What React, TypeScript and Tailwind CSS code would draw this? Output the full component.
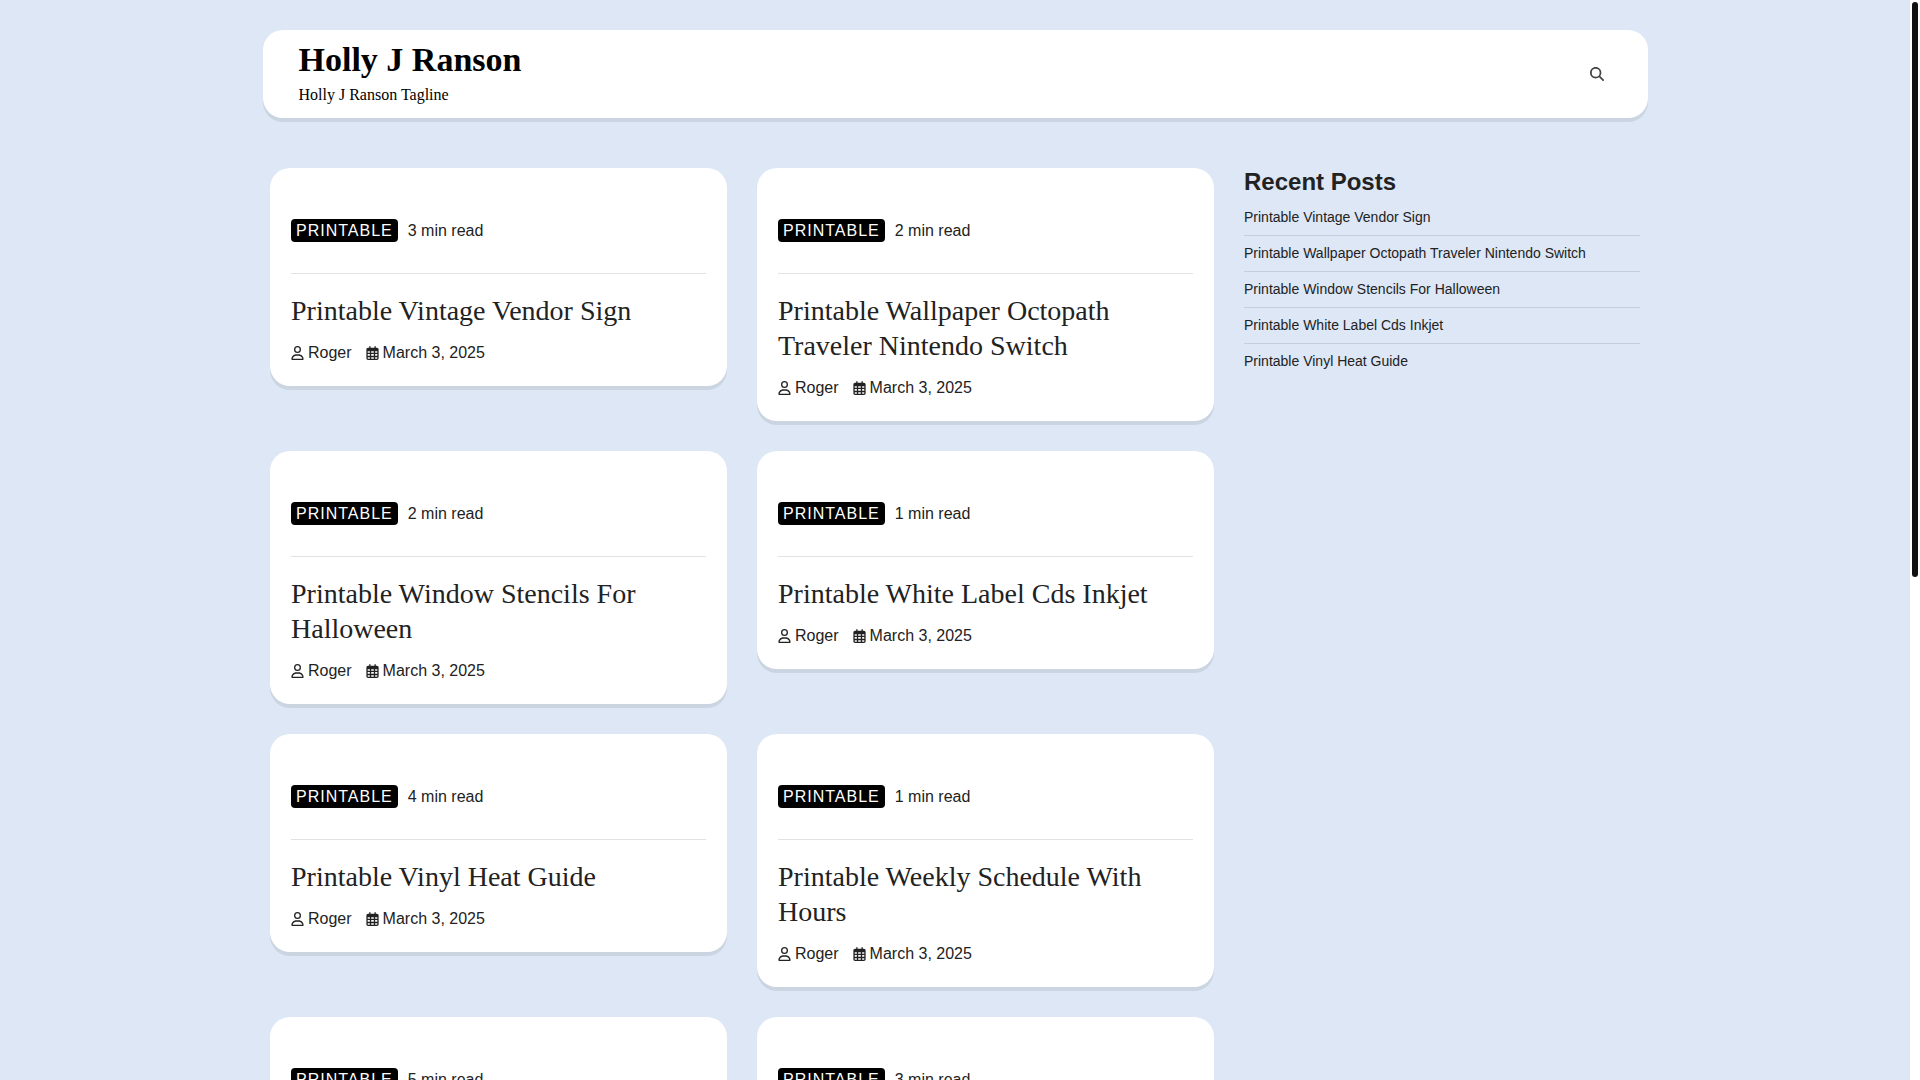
import { FaMagnifyingGlass, FaRegCalendarDays, FaRegUser } from "react-icons/fa6"

type Post = {
  title: string
  minutes: number
}

const posts: Post[] = [
  { title: "Printable Vintage Vendor Sign", minutes: 3 },
  { title: "Printable Wallpaper Octopath Traveler Nintendo Switch", minutes: 2 },
  { title: "Printable Window Stencils For Halloween", minutes: 2 },
  { title: "Printable White Label Cds Inkjet", minutes: 1 },
  { title: "Printable Vinyl Heat Guide", minutes: 4 },
  { title: "Printable Weekly Schedule With Hours", minutes: 1 },
  { title: "Printable Wall Art", minutes: 5 },
  { title: "Printable Water Bottle Labels", minutes: 3 },
]

function PostCard({ post }: { post: Post }) {
  return (
    <article className="rounded-[20px] bg-white px-[21px] pt-[51px] pb-[21px] shadow-[0_4px_0_#cbd5e1]">
      <div className="flex items-center gap-[10px] border-b border-[#e2e2e2] pb-[31px] leading-[23px]">
        <a href="#" className="rounded bg-black px-[5px] tracking-[1px] text-white uppercase">
          Printable
        </a>
        <span>{post.minutes} min read</span>
      </div>
      <h2 className="mt-[19px] font-['Liberation_Serif',serif] text-[28px] leading-[35px]">
        <a href="#">{post.title}</a>
      </h2>
      <div className="mt-[13px] flex items-center gap-[14px] leading-6">
        <a href="#" className="flex items-center gap-1">
          <FaRegUser className="h-[14px] w-[13px]" />
          Roger
        </a>
        <a href="#" className="flex items-center gap-1">
          <FaRegCalendarDays className="h-[14px] w-[13px]" />
          March 3, 2025
        </a>
      </div>
    </article>
  )
}

export default function App() {
  return (
    <div className="flex h-screen bg-[#dde7f6] font-['Liberation_Sans',sans-serif] text-base text-[#222]">
      <div className="min-w-0 flex-1 overflow-y-auto py-[30px] [scrollbar-width:none]">
        <header className="mx-auto flex max-w-[1385px] items-center justify-between rounded-[20px] bg-white px-9 pt-[10px] pb-[11px] shadow-[0_4px_0_#cbd5e1]">
          <div className="font-['Liberation_Serif',serif] text-black">
            <h1 className="text-[34px] leading-10 font-bold">
              <a href="#">Holly J Ranson</a>
            </h1>
            <p className="mt-[3px] leading-6">Holly J Ranson Tagline</p>
          </div>
          <button type="button" aria-label="Search" className="p-2 text-[#444]">
            <FaMagnifyingGlass className="size-[14px]" />
          </button>
        </header>

        <div className="mx-auto mt-[50px] flex max-w-[1370px] items-start gap-[30px]">
          <main className="grid min-w-0 flex-1 grid-cols-2 items-start gap-[30px]">
            {posts.map((post) => (
              <PostCard key={post.title} post={post} />
            ))}
          </main>

          <aside className="w-[396px] shrink-0">
            <h2 className="text-2xl leading-7 font-bold">Recent Posts</h2>
            <ul className="mt-1 divide-y divide-[#c4cede] text-sm leading-5">
              {posts.slice(0, 5).map((post) => (
                <li key={post.title} className="pt-[7px] pb-2">
                  <a href="#">{post.title}</a>
                </li>
              ))}
            </ul>
          </aside>
        </div>
      </div>

      {/* scroll track */}
      <div aria-hidden="true" className="w-[10px] shrink-0 bg-white p-[2px]">
        <div className="h-[53.4%] rounded-[3px] bg-[#111]" />
      </div>
    </div>
  )
}
